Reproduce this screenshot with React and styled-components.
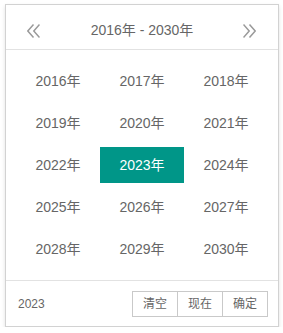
import styled, { createGlobalStyle } from "styled-components";

const Global = createGlobalStyle`
  html, body {
    margin: 0;
    padding: 0;
    background: #fff;
  }
  body {
    font-family: "Liberation Sans", "Noto Sans CJK SC", Arial, sans-serif;
  }
`;

const years = [];
for (let y = 2016; y <= 2030; y++) years.push(y);

const Panel = styled.div`
  box-sizing: border-box;
  width: 274px;
  margin: 4px 0 0 5px;
  border: 1px solid #d2d2d2;
  box-shadow: 0 2px 4px rgba(0, 0, 0, 0.12);
  background: #fff;
  color: #666;
`;

const Header = styled.div`
  position: relative;
  height: 45px;
  box-sizing: border-box;
  padding: 10px 70px 5px;
  line-height: 30px;
  text-align: center;
  font-size: 14px;
  color: #666;
  border-bottom: 1px solid #e2e2e2;
`;

const Arrow = styled.span`
  position: absolute;
  top: 11px;
  ${(p) => (p.$side === "left" ? "left: 21px;" : "right: 22px;")}
  height: 30px;
  display: flex;
  align-items: center;
  color: #9a9a9a;
`;

const Content = styled.div`
  padding: 10px;
`;

const Grid = styled.ul`
  list-style: none;
  margin: 0;
  padding: 0;
  display: grid;
  grid-template-columns: repeat(3, 1fr);
`;

const Year = styled.li`
  height: 36px;
  line-height: 37px;
  margin: 3px 0;
  text-align: center;
  font-size: 14px;
  color: ${(p) => (p.$active ? "#fff" : "#666")};
  background: ${(p) => (p.$active ? "#009688" : "transparent")};
`;

const Footer = styled.div`
  height: 46px;
  box-sizing: border-box;
  padding: 10px;
  border-top: 1px solid #e2e2e2;
  display: flex;
  align-items: center;
  justify-content: space-between;
  line-height: 26px;
`;

const Preview = styled.span`
  font-size: 12px;
  color: #666;
  padding-left: 2px;
`;

const Btns = styled.div`
  display: flex;
`;

const Btn = styled.span`
  height: 26px;
  line-height: 24px;
  box-sizing: border-box;
  padding: 0 10px;
  margin-left: -1px;
  border: 1px solid #c9c9c9;
  background: #fff;
  font-size: 12px;
  color: #666;
`;

const DoubleChevron = ({ dir }) => (
  <svg width="13" height="14" viewBox="0 0 13 14" fill="none" stroke="currentColor" strokeWidth="1.5">
    {dir === "left" ? (
      <>
        <path d="M6.5 0.5 L0.8 7 L6.5 13.5" />
        <path d="M12.5 0.5 L6.8 7 L12.5 13.5" />
      </>
    ) : (
      <>
        <path d="M0.5 0.5 L6.2 7 L0.5 13.5" />
        <path d="M6.5 0.5 L12.2 7 L6.5 13.5" />
      </>
    )}
  </svg>
);

export default function App() {
  return (
    <>
      <Global />
      <Panel>
        <Header>
          <Arrow $side="left">
            <DoubleChevron dir="left" />
          </Arrow>
          2016年 - 2030年
          <Arrow $side="right">
            <DoubleChevron dir="right" />
          </Arrow>
        </Header>
        <Content>
          <Grid>
            {years.map((y) => (
              <Year key={y} $active={y === 2023}>
                {y}年
              </Year>
            ))}
          </Grid>
        </Content>
        <Footer>
          <Preview>2023</Preview>
          <Btns>
            <Btn>清空</Btn>
            <Btn>现在</Btn>
            <Btn>确定</Btn>
          </Btns>
        </Footer>
      </Panel>
    </>
  );
}
